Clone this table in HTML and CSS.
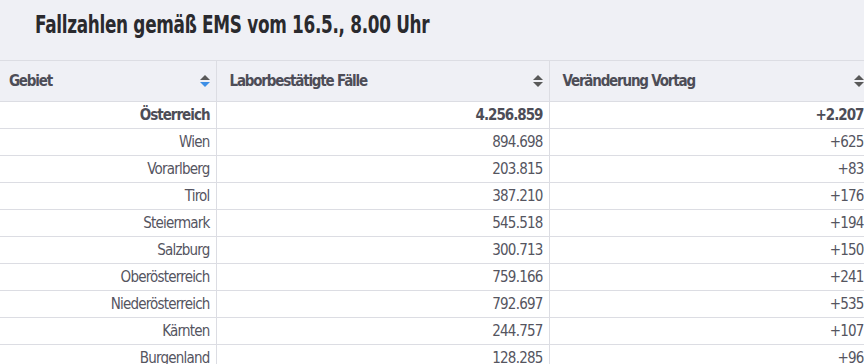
FILE: index.html
```html
<!DOCTYPE html>
<html lang="de">
<head>
<meta charset="utf-8">
<link rel="stylesheet" href="styles.css">
</head>
<body>
<div class="page">
  <div class="title-bar"><h1 class="title">Fallzahlen gemäß EMS vom 16.5., 8.00 Uhr</h1></div>
  <table class="data">
    <colgroup><col class="c1"><col class="c2"><col class="c3"></colgroup>
    <thead>
      <tr>
        <th class="first"><div class="th-in"><span>Gebiet</span><svg class="sort" width="10" height="12" viewBox="0 0 10 12"><path d="M5 0 L10 5 H0 Z" fill="#595959"/><path d="M0 7 H10 L5 12 Z" fill="#3d8fe6"/></svg></div></th>
        <th><div class="th-in"><span>Laborbestätigte Fälle</span><svg class="sort" width="10" height="12" viewBox="0 0 10 12"><path d="M5 0 L10 5 H0 Z" fill="#595959"/><path d="M0 7 H10 L5 12 Z" fill="#595959"/></svg></div></th>
        <th><div class="th-in"><span>Veränderung Vortag</span><svg class="sort" width="10" height="12" viewBox="0 0 10 12"><path d="M5 0 L10 5 H0 Z" fill="#595959"/><path d="M0 7 H10 L5 12 Z" fill="#595959"/></svg></div></th>
      </tr>
    </thead>
    <tbody>
      <tr class="total"><td>Österreich</td><td>4.256.859</td><td>+2.207</td></tr>
      <tr><td>Wien</td><td>894.698</td><td>+625</td></tr>
      <tr><td>Vorarlberg</td><td>203.815</td><td>+83</td></tr>
      <tr><td>Tirol</td><td>387.210</td><td>+176</td></tr>
      <tr><td>Steiermark</td><td>545.518</td><td>+194</td></tr>
      <tr><td>Salzburg</td><td>300.713</td><td>+150</td></tr>
      <tr><td>Oberösterreich</td><td>759.166</td><td>+241</td></tr>
      <tr><td>Niederösterreich</td><td>792.697</td><td>+535</td></tr>
      <tr><td>Kärnten</td><td>244.757</td><td>+107</td></tr>
      <tr><td>Burgenland</td><td>128.285</td><td>+96</td></tr>
    </tbody>
  </table>
</div>
</body>
</html>
```
FILE: styles.css
```css
html, body {
  margin: 0;
  padding: 0;
  background: #ffffff;
  overflow: hidden;
}
.page {
  width: 870px;
  font-family: "DejaVu Sans Condensed", "DejaVu Sans", sans-serif;
  font-stretch: condensed;
  color: #55555f;
}
.title-bar {
  background: #eff0f5;
  height: 61px;
  display: flex;
  align-items: center;
  padding-left: 35px;
  border-bottom: 1px solid #dcdde3;
  box-sizing: border-box;
}
.title {
  margin: 0;
  font-size: 25px;
  font-weight: bold;
  color: #2a2a2e;
  line-height: 1;
  padding-bottom: 12px;
  letter-spacing: -0.4px;
  transform: scaleX(0.75);
  transform-origin: left center;
  white-space: nowrap;
}
.data {
  border-collapse: collapse;
  width: 870px;
  table-layout: fixed;
  font-size: 15px;
}
.c1 { width: 216px; }
.c2 { width: 333px; }
.c3 { width: 321px; }
thead th {
  background: #eff0f5;
  height: 40px;
  padding: 0 6px 0 13px;
  text-align: left;
  font-weight: bold;
  color: #4d4d57;
  letter-spacing: -1.2px;
  border-right: 1px solid #dcdde3;
  border-bottom: 1px solid #dcdde3;
  box-sizing: border-box;
}
thead th.first { padding-left: 9px; }
.th-in {
  display: flex;
  align-items: center;
  justify-content: space-between;
}
.sort { display: block; }
tbody td {
  height: 27px;
  padding: 0 6px;
  text-align: right;
  letter-spacing: -0.8px;
  border-right: 1px solid #dcdde3;
  border-bottom: 1px solid #dcdde3;
  box-sizing: border-box;
  white-space: nowrap;
}
tbody tr.total td {
  font-weight: bold;
  letter-spacing: -1px;
  color: #4d4d57;
}
```
